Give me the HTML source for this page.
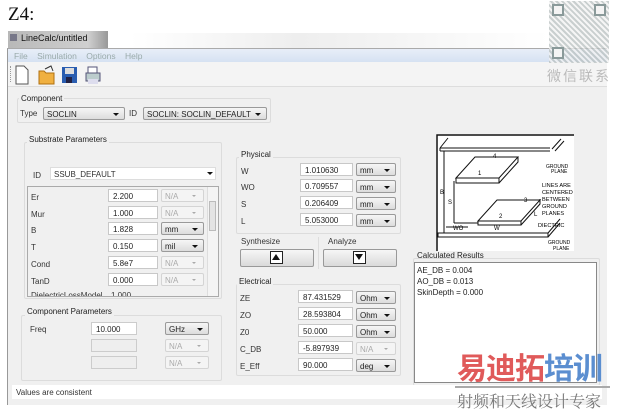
<!DOCTYPE html>
<html><head><meta charset="utf-8"><style>
*{box-sizing:border-box;margin:0;padding:0}
body{width:617px;height:413px;background:#fff;position:relative;overflow:hidden;font-family:"Liberation Sans","Noto Sans CJK SC",sans-serif;font-size:8px;color:#222}
.a{position:absolute}
.t{position:absolute;white-space:nowrap;font-size:8px;color:#333}
.box{position:absolute;background:#fff;border:1px solid #c8c8c8;height:13px;font-size:8px;padding:2px 0 0 4px;white-space:nowrap;color:#222}
.cb{position:absolute;border:1px solid #9a9a9a;border-radius:2px;background:linear-gradient(#f6f6f6,#dcdcdc);height:13px;font-size:8px;padding:2px 0 0 3px;white-space:nowrap}
.cb:after{content:"";position:absolute;right:5px;top:5px;border-left:3px solid transparent;border-right:3px solid transparent;border-top:3px solid #111}
.dis{position:absolute;border:1px solid #d4d4d4;border-radius:2px;background:#f4f4f4;height:13px;font-size:8px;padding:2px 0 0 3px;color:#aaa}
.dis:after{content:"";position:absolute;right:7px;top:5px;border-left:2px solid transparent;border-right:2px solid transparent;border-top:2px solid #aaa}
.grp{position:absolute;border:1px solid #dcdcdc;border-radius:2px}
.gt{position:absolute;background:#f0f0f0;padding:0 2px;font-size:8px;color:#222;white-space:nowrap}
</style></head><body>
<div class="t" style="left:8px;top:4px;font-family:'Liberation Serif',serif;font-size:19px;color:#111">Z4:</div>
<div class="a" style="left:8px;top:31px;width:100px;height:17px;background:linear-gradient(90deg,#b8b8b8,#d0d0d0 80%,#989898);"></div>
<div class="a" style="left:10px;top:34px;width:7px;height:7px;background:#778"></div>
<div class="t" style="left:21px;top:33px;font-size:9px;color:#111">LineCalc/untitled</div>
<div class="a" style="left:130px;top:33px;width:420px;height:15px;background:linear-gradient(90deg,#fff,#eee 40%,#fff)"></div>
<div class="a" style="left:7px;top:48px;width:600px;height:357px;background:#f0f0f0;border-left:1px solid #999;border-top:1px solid #aaa"></div>
<div class="a" style="left:8px;top:49px;width:599px;height:13px;background:linear-gradient(#e8eef8,#d6e2f2)"></div>
<div class="t" style="left:14px;top:51px;color:#9aa;font-size:8.5px">File&nbsp;&nbsp;&nbsp;&nbsp;Simulation&nbsp;&nbsp;&nbsp;&nbsp;Options&nbsp;&nbsp;&nbsp;&nbsp;Help</div>
<div class="a" style="left:8px;top:62px;width:599px;height:25px;background:#f4f4f4;border-bottom:1px solid #ddd"></div>
<div class="a" style="left:10px;top:66px;width:1px;height:16px;border-left:1px dotted #999"></div>
<svg class="a" style="left:14px;top:65px" width="90" height="20">
<path d="M2 1h8l4 4v14H2z" fill="#fff" stroke="#555"/>
<path d="M25 6h5l2 2h8v11H25z" fill="#f0b040" stroke="#b07010"/><path d="M31 4l6-3 2 5" fill="none" stroke="#333"/>
<rect x="48" y="2" width="15" height="16" fill="#2a5db0"/><rect x="51" y="3" width="9" height="6" fill="#ddd"/><rect x="52" y="12" width="6" height="6" fill="#224"/>
<path d="M72 8h14v8H72z" fill="#bcc" stroke="#557"/><path d="M74 2h9v6h-9z" fill="#fff" stroke="#557"/><rect x="74" y="14" width="10" height="5" fill="#dde"/>
</svg>
<div class="grp" style="left:17px;top:98px;width:254px;height:25px"></div>
<div class="gt" style="left:19px;top:94px">Component</div>
<div class="t" style="left:20px;top:109px">Type</div>
<div class="cb" style="left:43px;top:107px;width:82px">SOCLIN</div>
<div class="t" style="left:129px;top:109px">ID</div>
<div class="cb" style="left:143px;top:107px;width:124px">SOCLIN: SOCLIN_DEFAULT</div>
<div class="grp" style="left:24px;top:142px;width:198px;height:157px"></div>
<div class="gt" style="left:27px;top:135px">Substrate Parameters</div>
<div class="t" style="left:33px;top:171px">ID</div>
<div class="a" style="left:50px;top:167px;width:166px;height:13px;background:#fff;border:1px solid #ddd"></div>
<div class="t" style="left:54px;top:170px">SSUB_DEFAULT</div>
<div class="a" style="left:207px;top:172px;border-left:3px solid transparent;border-right:3px solid transparent;border-top:3px solid #111"></div>
<div class="a" style="left:27px;top:186px;width:192px;height:111px;background:#f0f0f0;border:1px solid #aaa;overflow:hidden">
<div class="a" style="left:179px;top:0;width:11px;height:110px;background:#f4f4f4;border-left:1px solid #ddd"></div>
<div class="a" style="left:181px;top:14px;width:7px;height:30px;background:#e4e4e4;border:1px solid #bbb"></div>
</div>
<div class="t" style="left:31px;top:193px">Er</div><div class="box" style="left:108px;top:189px;width:50px">2.200</div><div class="dis" style="left:161px;top:189px;width:43px">N/A</div>
<div class="t" style="left:31px;top:210px">Mur</div><div class="box" style="left:108px;top:206px;width:50px">1.000</div><div class="dis" style="left:161px;top:206px;width:43px">N/A</div>
<div class="t" style="left:31px;top:226px">B</div><div class="box" style="left:108px;top:222px;width:50px">1.828</div><div class="cb" style="left:161px;top:222px;width:43px">mm</div>
<div class="t" style="left:31px;top:243px">T</div><div class="box" style="left:108px;top:239px;width:50px">0.150</div><div class="cb" style="left:161px;top:239px;width:43px">mil</div>
<div class="t" style="left:31px;top:260px">Cond</div><div class="box" style="left:108px;top:256px;width:50px">5.8e7</div><div class="dis" style="left:161px;top:256px;width:43px">N/A</div>
<div class="t" style="left:31px;top:277px">TanD</div><div class="box" style="left:108px;top:273px;width:50px">0.000</div><div class="dis" style="left:161px;top:273px;width:43px">N/A</div>
<div class="a" style="left:28px;top:291px;width:178px;height:5px;overflow:hidden"><div class="t" style="left:3px;top:0px">DielectricLossModel</div><div class="t" style="left:83px;top:0">1.000</div></div>
<div class="grp" style="left:21px;top:315px;width:201px;height:66px"></div>
<div class="gt" style="left:25px;top:307px">Component Parameters</div>
<div class="t" style="left:30px;top:325px">Freq</div>
<div class="box" style="left:91px;top:322px;width:46px;border-color:#ccc">10.000</div>
<div class="cb" style="left:165px;top:322px;width:44px">GHz</div>
<div class="box" style="left:91px;top:339px;width:46px;background:#eee;border-color:#ccc"></div>
<div class="dis" style="left:165px;top:339px;width:44px">N/A</div>
<div class="box" style="left:91px;top:356px;width:46px;background:#eee;border-color:#ccc"></div>
<div class="dis" style="left:165px;top:356px;width:44px">N/A</div>
<div class="grp" style="left:236px;top:157px;width:165px;height:77px"></div>
<div class="gt" style="left:239px;top:150px">Physical</div>
<div class="t" style="left:241px;top:167px">W</div><div class="box" style="left:300px;top:163px;width:53px">1.010630</div><div class="cb" style="left:356px;top:163px;width:40px">mm</div>
<div class="t" style="left:241px;top:183px">WO</div><div class="box" style="left:300px;top:179px;width:53px">0.709557</div><div class="cb" style="left:356px;top:180px;width:40px">mm</div>
<div class="t" style="left:241px;top:200px">S</div><div class="box" style="left:300px;top:196px;width:53px">0.206409</div><div class="cb" style="left:356px;top:197px;width:40px">mm</div>
<div class="t" style="left:241px;top:217px">L</div><div class="box" style="left:300px;top:213px;width:53px">5.053000</div><div class="cb" style="left:356px;top:214px;width:40px">mm</div>
<div class="t" style="left:241px;top:237px">Synthesize</div>
<div class="t" style="left:328px;top:237px">Analyze</div>
<div class="a" style="left:318px;top:237px;width:1px;height:32px;background:#ddd"></div>
<div class="a" style="left:240px;top:249px;width:74px;height:18px;border:1px solid #999;border-radius:2px;background:linear-gradient(#f6f6f6,#dadada)"></div>
<div class="a" style="left:270px;top:251px;width:13px;height:13px;border:1px solid #222;background:#fff"></div>
<div class="a" style="left:272px;top:254px;border-left:4px solid transparent;border-right:4px solid transparent;border-bottom:6px solid #111"></div>
<div class="a" style="left:323px;top:249px;width:74px;height:18px;border:1px solid #999;border-radius:2px;background:linear-gradient(#f6f6f6,#dadada)"></div>
<div class="a" style="left:353px;top:251px;width:13px;height:13px;border:1px solid #222;background:#fff"></div>
<div class="a" style="left:355px;top:254px;border-left:4px solid transparent;border-right:4px solid transparent;border-top:6px solid #111"></div>
<div class="grp" style="left:236px;top:284px;width:165px;height:92px"></div>
<div class="gt" style="left:237px;top:277px">Electrical</div>
<div class="t" style="left:240px;top:294px">ZE</div><div class="box" style="left:298px;top:290px;width:55px">87.431529</div><div class="cb" style="left:356px;top:291px;width:40px">Ohm</div>
<div class="t" style="left:240px;top:311px">ZO</div><div class="box" style="left:298px;top:307px;width:55px">28.593804</div><div class="cb" style="left:356px;top:308px;width:40px">Ohm</div>
<div class="t" style="left:240px;top:328px">Z0</div><div class="box" style="left:298px;top:324px;width:55px">50.000</div><div class="cb" style="left:356px;top:325px;width:40px">Ohm</div>
<div class="t" style="left:240px;top:345px">C_DB</div><div class="box" style="left:298px;top:341px;width:55px">-5.897939</div><div class="dis" style="left:356px;top:342px;width:40px">N/A</div>
<div class="t" style="left:240px;top:362px">E_Eff</div><div class="box" style="left:298px;top:358px;width:55px">90.000</div><div class="cb" style="left:356px;top:359px;width:40px">deg</div>
<svg class="a" style="left:436px;top:134px" width="138" height="117" font-family="Liberation Sans" font-size="6">
<rect x="0" y="0" width="138" height="117" fill="#fff"/>
<path d="M1 117V1h137" fill="none" stroke="#111" stroke-width="1.5"/>
<path d="M4 14l8-10M4 14h110M4 17h110M4 14v3" fill="none" stroke="#111"/>
<path d="M116 15l9-10M119 17l9-10" stroke="#111"/>
<path d="M20 44l19-21h43l-19 21zM20 44v5h43v-5M63 49l19-21v-5" fill="none" stroke="#111"/>
<path d="M42 87l19-21h43l-19 21zM42 87v4h43v-4M85 91l19-21v-5" fill="none" stroke="#111"/>
<path d="M2 99h110v4H2zM112 103l12-14M112 99l12-14" fill="none" stroke="#111"/>
<path d="M8 17v82M18 47v42M18 89h24M10 93h22" fill="none" stroke="#111"/>
<text x="4" y="60">B</text><text x="12" y="70">S</text><text x="42" y="41">1</text><text x="63" y="84">2</text><text x="57" y="24">4</text><text x="88" y="68">3</text><text x="98" y="82">L</text>
<text x="17" y="96">WO</text><text x="58" y="96">W</text>
<text x="110" y="34" font-size="5">GROUND</text><text x="115" y="39" font-size="5">PLANE</text>
<text x="106" y="53" font-size="5.6">LINES ARE</text><text x="106" y="60" font-size="5.6">CENTERED</text><text x="106" y="67" font-size="5.6">BETWEEN</text><text x="106" y="74" font-size="5.6">GROUND</text><text x="106" y="81" font-size="5.6">PLANES</text>
<text x="102" y="93" font-size="5.6">DIECTRIC</text>
<text x="112" y="110" font-size="5">GROUND</text><text x="117" y="116" font-size="5">PLANE</text>
</svg>
<div class="grp" style="left:413px;top:258px;width:187px;height:128px"></div>
<div class="gt" style="left:415px;top:251px;background:none">Calculated Results</div>
<div class="a" style="left:414px;top:262px;width:183px;height:121px;background:#fff;border:1px solid #888"></div>
<div class="t" style="left:417px;top:265px;line-height:11px;color:#222">AE_DB = 0.004<br>AO_DB = 0.013<br>SkinDepth = 0.000</div>
<div class="a" style="left:12px;top:385px;width:590px;height:14px;background:#fff"></div>
<div class="t" style="left:16px;top:388px">Values are consistent</div>
<div class="a" style="left:549px;top:1px;width:60px;height:62px;background:repeating-linear-gradient(45deg,#b8c0c0 0 2px,#f2f2f2 2px 4px),#ddd;opacity:.75"></div>
<div class="a" style="left:552px;top:4px;width:12px;height:12px;border:2px solid #8a9a9a;background:#f4f4f4"></div>
<div class="a" style="left:594px;top:4px;width:12px;height:12px;border:2px solid #8a9a9a;background:#f4f4f4"></div>
<div class="a" style="left:552px;top:47px;width:12px;height:12px;border:2px solid #8a9a9a;background:#f4f4f4"></div>
<div class="t" style="left:547px;top:66px;font-size:14px;color:#bbb;letter-spacing:2px">微信联系</div>
<div class="t" style="left:457px;top:354px;font-size:30px;font-weight:bold;letter-spacing:-1px;line-height:32px"><span style="color:#e05a5a">易迪拓</span><span style="color:#5b8ed0">培训</span></div>
<div class="a" style="left:455px;top:386px;width:155px;height:2px;background:#aaa"></div>
<div class="t" style="left:457px;top:389px;font-size:16px;color:#777;font-family:'Noto Serif CJK SC',serif">射频和天线设计专家</div>
</body></html>
